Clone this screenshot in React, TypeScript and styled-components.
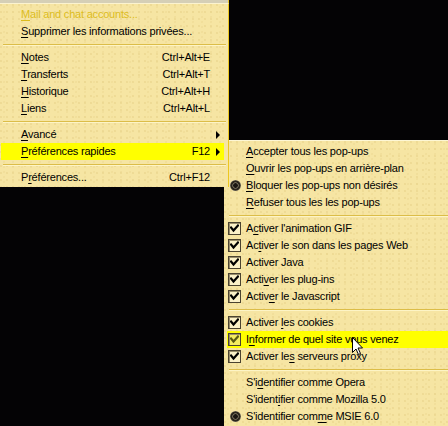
import React from "react";
import styled, { createGlobalStyle } from "styled-components";

const Global = createGlobalStyle`
  html, body { margin: 0; padding: 0; background: #040305; }
  body { width: 448px; height: 426px; overflow: hidden; }
  #root { width: 448px; height: 426px; }
`;

const Screen = styled.div`
  position: relative;
  display: flex;
  align-items: flex-start;
  width: 448px;
  height: 426px;
  overflow: hidden;
  background: #040305;
  font-family: "Liberation Sans", Arial, sans-serif;
  font-size: 11px;
  letter-spacing: -0.2px;
  color: #000;
`;

const paper = `
  background-color: #f6e5a3;
  background-image:
    radial-gradient(circle at 1px 1px, #ead58e 0.6px, transparent 0.9px),
    radial-gradient(circle at 4px 3px, #efdb96 0.6px, transparent 0.9px);
  background-size: 6px 7px, 9px 5px;
`;

const LeftColumn = styled.div`
  position: relative;
  z-index: 2;
  width: 229px;
  display: flex;
  flex-direction: column;
`;

const MenuBarEdge = styled.div`
  height: 3px;
  background: #d5cfb6;
  border-bottom: 1px solid #fbf3cf;
  border-right: 1px solid #e9c52a;
`;

const MainMenu = styled.div`
  ${paper}
  display: flex;
  flex-direction: column;
  padding: 2px 4px 1px 1px;
  border-right: 1px solid #ecc620;
`;

const Row = styled.div<{ $hl?: boolean }>`
  display: flex;
  align-items: center;
  height: 17px;
  line-height: 17px;
  white-space: nowrap;
  background: ${(p) => (p.$hl ? "#ffff00" : "transparent")};
`;

const MainRow = styled(Row)`
  padding: 0 3px 0 20px;
`;

const Label = styled.span<{ $disabled?: boolean }>`
  flex: 1;
  color: ${(p) => (p.$disabled ? "#dcbc1c" : "#000")};
`;

const Shortcut = styled.span`
  text-align: right;
`;

const ArrowCell = styled.span`
  width: 11px;
  display: flex;
  justify-content: flex-end;
  align-items: center;
`;

const Triangle = styled.span`
  width: 0;
  height: 0;
  border-top: 4px solid transparent;
  border-bottom: 4px solid transparent;
  border-left: 4px solid #000;
  margin-right: 1px;
`;

const Separator = styled.div`
  height: 9px;
  display: flex;
  flex-direction: column;
  justify-content: center;
  &::before {
    content: "";
    display: block;
    height: 1px;
    margin: 0 -2px 0 2px;
    background: #dcbd48;
  }
  &::after {
    content: "";
    display: block;
    height: 1px;
    margin: 0 -2px 0 2px;
    background: #fdf4c6;
  }
`;

const U = styled.span`
  text-decoration: underline;
  text-underline-offset: 2px;
`;

const RightColumn = styled.div`
  flex: 1;
  margin-left: -5px;
  padding-top: 140px;
  display: flex;
  flex-direction: column;
`;

const SubMenu = styled.div`
  ${paper}
  display: flex;
  flex-direction: column;
  padding: 2px 0 0 3px;
  border-top: 1px solid #fdf6d4;
  height: 300px;
`;

const SubRow = styled(Row)`
  padding-left: 1px;
`;

const IconCell = styled.span`
  width: 14px;
  height: 13px;
  margin-right: 4px;
  display: flex;
  align-items: center;
  justify-content: flex-start;
`;

const CheckBox = styled.span<{ $hl?: boolean }>`
  box-sizing: border-box;
  width: 13px;
  height: 13px;
  border: 1px solid #4b4330;
  box-shadow: inset 1px 1px 0 #9a8f6c;
  background: ${(p) => (p.$hl ? "#f3ec60" : "#fbf1c8")};
  display: flex;
  align-items: center;
  justify-content: center;
`;

const Radio = styled.span`
  margin-left: 2px;
  width: 11px;
  height: 11px;
  border-radius: 50%;
  background: radial-gradient(circle at 50% 50%, #1a1712 0 2px, #6d6654 2.5px 3px, #2a261c 3.6px 4.6px, #8a8270 5.5px);
`;

const Cursor = styled.svg`
  position: absolute;
  left: 352px;
  top: 337px;
  pointer-events: none;
`;

const Check = ({ color }: { color: string }) => (
  <svg width="9" height="9" viewBox="0 0 9 9">
    <path d="M1 3.5 L3.5 6.5 L8 1.5" fill="none" stroke={color} strokeWidth="2.2" strokeLinecap="square" />
  </svg>
);

type MainItem = { label: React.ReactNode; shortcut?: string; arrow?: boolean; hl?: boolean; disabled?: boolean };

const mnemonic = (text: string, idx: number) => (
  <>
    {text.slice(0, idx)}
    <U>{text.charAt(idx)}</U>
    {text.slice(idx + 1)}
  </>
);

const mainGroups: MainItem[][] = [
  [
    { label: mnemonic("Mail and chat accounts...", 0), disabled: true },
    { label: mnemonic("Supprimer les informations privées...", 0) },
  ],
  [
    { label: mnemonic("Notes", 0), shortcut: "Ctrl+Alt+E" },
    { label: mnemonic("Transferts", 0), shortcut: "Ctrl+Alt+T" },
    { label: mnemonic("Historique", 0), shortcut: "Ctrl+Alt+H" },
    { label: mnemonic("Liens", 0), shortcut: "Ctrl+Alt+L" },
  ],
  [
    { label: mnemonic("Avancé", 0), arrow: true },
    { label: mnemonic("Préférences rapides", 0), shortcut: "F12", arrow: true, hl: true },
  ],
  [{ label: mnemonic("Préférences...", 1), shortcut: "Ctrl+F12" }],
];

type SubItem = { label: React.ReactNode; kind: "none" | "radio" | "check"; hl?: boolean };

const subGroups: SubItem[][] = [
  [
    { label: mnemonic("Accepter tous les pop-ups", 0), kind: "none" },
    { label: mnemonic("Ouvrir les pop-ups en arrière-plan", 0), kind: "none" },
    { label: mnemonic("Bloquer les pop-ups non désirés", 0), kind: "radio" },
    { label: mnemonic("Refuser tous les les pop-ups", 0), kind: "none" },
  ],
  [
    { label: mnemonic("Activer l'animation GIF", 1), kind: "check" },
    { label: mnemonic("Activer le son dans les pages Web", 2), kind: "check" },
    { label: "Activer Java", kind: "check" },
    { label: mnemonic("Activer les plug-ins", 4), kind: "check" },
    { label: mnemonic("Activer le Javascript", 5), kind: "check" },
  ],
  [
    { label: mnemonic("Activer les cookies", 8), kind: "check" },
    { label: mnemonic("Informer de quel site vous venez", 1), kind: "check", hl: true },
    { label: mnemonic("Activer les serveurs proxy", 10), kind: "check" },
  ],
  [
    { label: mnemonic("S'identifier comme Opera", 3), kind: "none" },
    { label: mnemonic("S'identifier comme Mozilla 5.0", 7), kind: "none" },
    { label: mnemonic("S'identifier comme MSIE 6.0", 16), kind: "radio" },
  ],
];

export default function App() {
  return (
    <>
      <Global />
      <Screen>
        <LeftColumn>
          <MenuBarEdge />
          <MainMenu>
            {mainGroups.map((group, gi) => (
              <React.Fragment key={gi}>
                {gi > 0 && <Separator />}
                {group.map((item, ii) => (
                  <MainRow key={ii} $hl={item.hl}>
                    <Label $disabled={item.disabled}>{item.label}</Label>
                    {item.shortcut && <Shortcut>{item.shortcut}</Shortcut>}
                    <ArrowCell>{item.arrow && <Triangle />}</ArrowCell>
                  </MainRow>
                ))}
              </React.Fragment>
            ))}
          </MainMenu>
        </LeftColumn>
        <RightColumn>
          <SubMenu>
            {subGroups.map((group, gi) => (
              <React.Fragment key={gi}>
                {gi > 0 && <Separator />}
                {group.map((item, ii) => (
                  <SubRow key={ii} $hl={item.hl}>
                    <IconCell>
                      {item.kind === "check" && (
                        <CheckBox $hl={item.hl}>
                          <Check color={item.hl ? "#5a5a10" : "#000"} />
                        </CheckBox>
                      )}
                      {item.kind === "radio" && <Radio />}
                    </IconCell>
                    <Label>{item.label}</Label>
                  </SubRow>
                ))}
              </React.Fragment>
            ))}
          </SubMenu>
        </RightColumn>
        <Cursor width="12" height="19" viewBox="0 0 12 19">
          <path d="M0.5 0.5 L0.5 15.5 L4 12 L6.5 17.5 L8.5 16.5 L6 11 L10.5 11 Z" fill="#fff" stroke="#000" strokeWidth="1" />
        </Cursor>
      </Screen>
    </>
  );
}
